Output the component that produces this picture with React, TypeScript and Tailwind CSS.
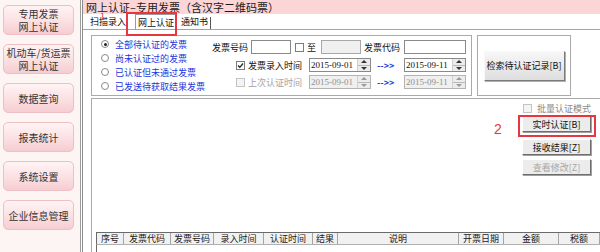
import React from 'react'

/* ── Config ──────────────────────────────────────────── */

const NAV: string[][] = [
  ['专用发票', '网上认证'],
  ['机动车/货运票', '网上认证'],
  ['数据查询'],
  ['报表统计'],
  ['系统设置'],
  ['企业信息管理'],
]

const RADIOS = ['全部待认证的发票', '尚未认证过的发票', '已认证但未通过发票', '已发送待获取结果发票']

const COLUMNS: { label: string; w: string }[] = [
  { label: '序号', w: 'w-[27px]' },
  { label: '发票代码', w: 'w-[47px]' },
  { label: '发票号码', w: 'w-[43px]' },
  { label: '录入时间', w: 'w-[50px]' },
  { label: '认证时间', w: 'w-[49px]' },
  { label: '结果', w: 'w-[25px]' },
  { label: '说明', w: 'w-[121px]' },
  { label: '开票日期', w: 'w-[45px]' },
  { label: '金额', w: 'w-[55px]' },
  { label: '税额', w: 'flex-1' },
]

/* ── Small controls ──────────────────────────────────── */

function Radio({ checked }: { checked?: boolean }) {
  return (
    <span className="flex h-[8px] w-[8px] items-center justify-center rounded-full border border-[#8a8a8a] bg-white">
      {checked && <span className="h-[3px] w-[3px] rounded-full bg-[#222]" />}
    </span>
  )
}

function Check({ checked, disabled }: { checked?: boolean; disabled?: boolean }) {
  return (
    <span
      className={`flex h-[9px] w-[9px] shrink-0 items-center justify-center border ${disabled ? 'border-[#c4c4c4] bg-[#f4f4f4]' : 'border-[#7c7c7c] bg-white'}`}
    >
      {checked && (
        <svg width="7" height="7" viewBox="0 0 7 7">
          <path d="M1 3.5 L2.8 5.3 L6 1.5" fill="none" stroke="#222" strokeWidth="1.3" />
        </svg>
      )}
    </span>
  )
}

function Spin({ disabled }: { disabled?: boolean }) {
  const c = disabled ? 'border-b-[#9a9a9a]' : 'border-b-[#333]'
  const d = disabled ? 'border-t-[#9a9a9a]' : 'border-t-[#333]'
  return (
    <div className="flex w-[13px] flex-col border-l border-[#d0d0d0] bg-[#ececec]">
      <div className="flex flex-1 items-center justify-center border-b border-[#b8b8b8]">
        <span className={`h-0 w-0 border-x-[3px] border-b-[3px] border-x-transparent ${c}`} />
      </div>
      <div className="flex flex-1 items-center justify-center">
        <span className={`h-0 w-0 border-x-[3px] border-t-[3px] border-x-transparent ${d}`} />
      </div>
    </div>
  )
}

function DateBox({ value, disabled }: { value: string; disabled?: boolean }) {
  return (
    <div
      className={`flex h-[14px] w-[62px] border ${disabled ? 'border-[#b4b4b4] bg-[#f0f0f0] text-[#909090]' : 'border-[#8a8a8a] bg-white text-[#111]'}`}
    >
      <span className="flex flex-1 items-center pl-[1px] font-['Liberation_Serif',serif] text-[9px] leading-none">
        {value}
      </span>
      <Spin disabled={disabled} />
    </div>
  )
}

function WinButton({ children, disabled }: { children: React.ReactNode; disabled?: boolean }) {
  return (
    <div
      className={`flex h-[16px] w-[69px] items-center justify-center border border-t-white border-l-white border-r-[#6e6e6e] border-b-[#6e6e6e] bg-[#ececec] text-[9px] leading-none shadow-[1px_1px_0_#a0a0a0] ${disabled ? 'text-[#a8a8a8]' : 'text-[#111]'}`}
    >
      {children}
    </div>
  )
}

/* ── App ─────────────────────────────────────────────── */

export default function App() {
  return (
    <div className="relative flex h-[252px] w-[600px] overflow-hidden bg-white font-['Noto_Sans_CJK_SC',sans-serif] text-[#111]">
      {/* Sidebar */}
      <div className="flex w-[81px] shrink-0 flex-col gap-[9px] border-r border-[#9c9c9c] bg-[#fdf4f4] pl-[3px] pt-[5px]">
        {NAV.map((lines) => (
          <div
            key={lines.join()}
            className="flex h-[30px] w-[71px] flex-col items-center justify-center rounded-[5px] border border-[#eebfc3] bg-gradient-to-b from-[#fff3f4] via-[#fbe2e4] to-[#f5cdd1] text-[10px] leading-[13px] text-[#333]"
          >
            {lines.map((l) => (
              <span key={l}>{l}</span>
            ))}
          </div>
        ))}
      </div>

      {/* Main */}
      <div className="ml-[1px] flex min-w-0 flex-1 flex-col border-l border-[#8c8c8c]">
        <div className="h-[14px] bg-[#fcd5d6] pl-[3px] text-[11px] leading-[14px] text-[#1a1a1a]">
          网上认证–专用发票（含汉字二维码票）
        </div>

        {/* Tabs */}
        <div className="flex h-[17px] items-end border-b border-[#a4a4a4] pl-[7px] text-[9px] leading-none">
          <span className="pb-[3px]">扫描录入</span>
          <span className="ml-[9px] flex h-[15px] items-center border border-b-0 border-[#9a9a9a] px-[2px]">网上认证</span>
          <span className="ml-[4px] border-r border-[#555] pb-[3px] pr-[2px]">通知书</span>
        </div>

        {/* Content */}
        <div className="flex flex-1 flex-col pl-[8px] pt-[5px]">
          <div className="flex">
            {/* Filter box */}
            <div className="flex h-[61px] w-[381px] border border-[#aaaaaa]">
              <div className="flex w-[118px] flex-col pl-[9px] pt-[1px]">
                {RADIOS.map((r, i) => (
                  <div key={r} className="flex h-[14px] items-center">
                    <Radio checked={i === 0} />
                    <span className="ml-[6px] text-[9px] leading-none text-[#1b34e0]">{r}</span>
                  </div>
                ))}
              </div>

              <div className="flex flex-1 flex-col items-end pr-[5px] pt-[4px] text-[9px] leading-none">
                <div className="flex h-[14px] items-center">
                  <span>发票号码</span>
                  <span className="ml-[3px] h-[14px] w-[40px] border border-[#8a8a8a] bg-white" />
                  <span className="ml-[4px]"><Check /></span>
                  <span className="ml-[3px]">至</span>
                  <span className="ml-[5px] h-[14px] w-[40px] border border-[#a8a8a8] bg-[#f0f0f0]" />
                  <span className="ml-[3px]">发票代码</span>
                  <span className="ml-[4px] h-[14px] w-[62px] border border-[#8a8a8a] bg-white" />
                </div>

                <div className="mt-[4px] flex h-[14px] items-center">
                  <Check checked />
                  <span className="ml-[3px]">发票录入时间</span>
                  <span className="ml-[7px]"><DateBox value="2015-09-01" /></span>
                  <span className="ml-[6px] w-[21px] text-[9px] font-bold text-[#2445dc]">--&gt;&gt;</span>
                  <span className="ml-[6px]"><DateBox value="2015-09-11" /></span>
                </div>

                <div className="mt-[3px] flex h-[14px] items-center">
                  <Check disabled />
                  <span className="ml-[3px] text-[#a4a4a4]">上次认证时间</span>
                  <span className="ml-[7px]"><DateBox value="2015-09-01" disabled /></span>
                  <span className="ml-[6px] w-[21px] text-[9px] font-bold text-[#2445dc]">--&gt;&gt;</span>
                  <span className="ml-[6px]"><DateBox value="2015-09-11" disabled /></span>
                </div>
              </div>
            </div>

            {/* Search box */}
            <div className="ml-[5px] flex h-[61px] w-[94px] items-center justify-center border border-[#aaaaaa]">
              <div className="flex h-[30px] w-[81px] items-center justify-center border border-t-[#f8f8f8] border-l-[#f8f8f8] border-r-[#7a7a7a] border-b-[#7a7a7a] bg-gradient-to-b from-[#f7f7f7] to-[#dedede] text-[9px] leading-none shadow-[1px_1px_0_#b0b0b0]">
                检索待认证记录[B]
              </div>
            </div>
          </div>

          {/* Result area */}
          <div className="mt-[2px] flex flex-1 flex-col border-l border-t border-[#aaaaaa]">
            <div className="flex flex-col items-end pr-[9px] pt-[4px]">
              <div className="flex h-[10px] w-[69px] items-center pl-[1px]">
                <Check disabled />
                <span className="ml-[5px] text-[9px] leading-none text-[#8a8a8a]">批量认证模式</span>
              </div>
              <div className="mt-[3px]"><WinButton>实时认证[B]</WinButton></div>
              <div className="mt-[7px]"><WinButton>接收结果[Z]</WinButton></div>
              <div className="mt-[4px]"><WinButton disabled>查看修改[Z]</WinButton></div>
            </div>

            <div className="ml-[4px] mt-[57px] flex flex-col">
              <div className="flex h-[13px] border-l border-t border-b border-l-[#6a6a6a] border-t-[#6a6a6a] border-b-[#b0b0b0] bg-[#f1f1f1]">
                {COLUMNS.map((c) => (
                  <div
                    key={c.label}
                    className={`${c.w} flex items-center justify-center border-r border-[#a4a4a4] text-[9px] leading-none text-[#222]`}
                  >
                    {c.label}
                  </div>
                ))}
              </div>
              <div className="h-[10px] border-l border-[#6a6a6a] bg-white" />
            </div>
          </div>
        </div>
      </div>

      {/* Annotations */}
      <div className="pointer-events-none absolute left-[126px] top-[12px] h-[24px] w-[51px] border-2 border-[#e8363f]" />
      <span className="pointer-events-none absolute left-[100px] top-[12px] text-[9px] leading-none text-[#e8363f]">1</span>
      <div className="pointer-events-none absolute left-[518px] top-[115px] h-[22px] w-[78px] border-2 border-[#e8363f]" />
      <span className="pointer-events-none absolute left-[494px] top-[122px] font-['Liberation_Sans',sans-serif] text-[14px] leading-none text-[#e8363f]">2</span>
    </div>
  )
}
